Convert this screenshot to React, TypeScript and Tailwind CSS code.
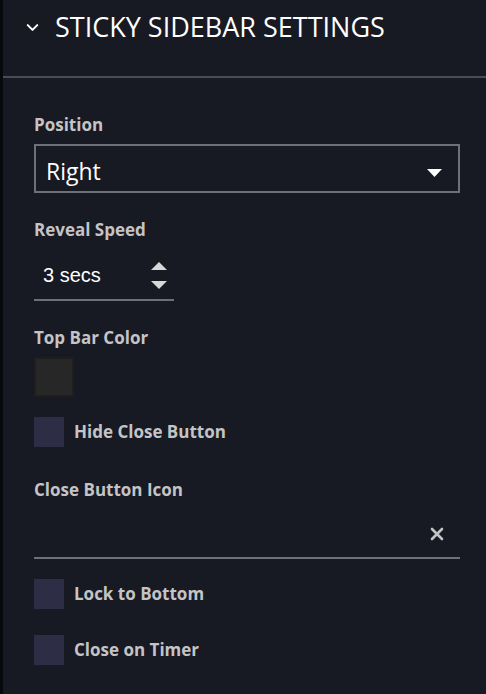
import { ChevronDown } from 'lucide-react';

function Checkbox({ label }: { label: string }) {
  return (
    <label className="flex items-center gap-[10px] cursor-pointer">
      <span className="w-[30px] h-[30px] bg-[#2d2e45] shrink-0" />
      <span className="text-[17px] leading-[22px] font-bold text-[#c4c4c6]">{label}</span>
    </label>
  );
}

export default function App() {
  return (
    <div className="flex w-[486px] h-[694px] bg-[#171923] font-['Open_Sans',sans-serif] overflow-hidden">
      <div className="w-[3px] shrink-0 bg-[#08090d]" />
      <div className="flex-1 flex flex-col">
        {/* Header */}
        <div className="h-[78px] flex items-start pt-[8px] pl-[20px] gap-[13px] border-b-2 border-[#4a4b57]">
          <ChevronDown className="w-[19px] h-[19px] text-white mt-[10px]" strokeWidth={2.6} />
          <h2 className="text-[27px] leading-[38px] text-white font-normal">
            STICKY SIDEBAR SETTINGS
          </h2>
        </div>

        <div className="pl-[31px] pr-[26px] pt-[36px] flex flex-col">
          {/* Position */}
          <p className="text-[17px] font-bold text-[#c4c4c6] leading-[22px]">Position</p>
          <div className="mt-[8px] h-[49px] border-2 border-[#6e6f7a] flex items-center justify-between pl-[10px] pr-[16px] pt-[4px]">
            <span className="text-[23px] leading-[30px] text-white">Right</span>
            <svg width="15" height="8" viewBox="0 0 15 8" className="mt-[4px]">
              <path d="M0 0 H15 L7.5 8 Z" fill="#ffffff" />
            </svg>
          </div>

          {/* Reveal Speed */}
          <p className="mt-[26px] text-[17px] font-bold text-[#c4c4c6] leading-[22px]">Reveal Speed</p>
          <div className="mt-[12px] w-[140px] h-[48px] border-b-2 border-[#6e6f7a] flex items-center justify-between pl-[9px] pr-[7px] pb-[2px]">
            <span className="text-[20px] text-white font-['Liberation_Sans',sans-serif]">3 secs</span>
            <div className="flex flex-col gap-[11px]">
              <svg width="16" height="8" viewBox="0 0 16 8">
                <path d="M0 8 L8 0 L16 8 Z" fill="#d8d8da" />
              </svg>
              <svg width="16" height="8" viewBox="0 0 16 8">
                <path d="M0 0 H16 L8 8 Z" fill="#d8d8da" />
              </svg>
            </div>
          </div>

          {/* Top Bar Color */}
          <p className="mt-[26px] text-[17px] font-bold text-[#c4c4c6] leading-[22px]">Top Bar Color</p>
          <div className="mt-[8px] w-[40px] h-[40px] bg-[#272727] border-2 border-[#1e1e1e]" />

          <div className="mt-[20px]">
            <Checkbox label="Hide Close Button" />
          </div>

          {/* Close Button Icon */}
          <p className="mt-[32px] text-[17px] font-bold text-[#c4c4c6] leading-[22px]">Close Button Icon</p>
          <div className="h-[58px] border-b-2 border-[#6e6f7a] flex items-end justify-end pr-[16px] pb-[16px]">
            <svg width="14" height="14" viewBox="0 0 14 14">
              <path d="M2 2 L12 12 M12 2 L2 12" stroke="#c4c4c6" strokeWidth="2.6" strokeLinecap="round" />
            </svg>
          </div>

          <div className="mt-[20px] flex flex-col gap-[26px]">
            <Checkbox label="Lock to Bottom" />
            <Checkbox label="Close on Timer" />
          </div>
        </div>
      </div>
    </div>
  );
}
